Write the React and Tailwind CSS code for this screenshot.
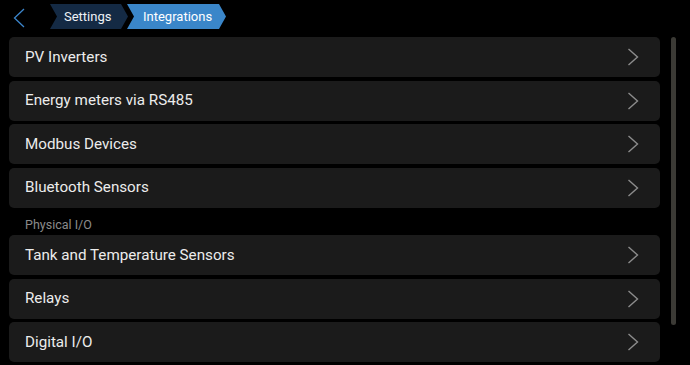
import React from 'react';

const items = [
  { label: 'PV Inverters' },
  { label: 'Energy meters via RS485' },
  { label: 'Modbus Devices' },
  { label: 'Bluetooth Sensors' },
  { section: 'Physical I/O' },
  { label: 'Tank and Temperature Sensors' },
  { label: 'Relays' },
  { label: 'Digital I/O' },
];

const Chevron = () => (
  <svg width="12" height="18" viewBox="0 0 12 18" fill="none">
    <path d="M1.5 1 L10.5 9 L1.5 17" stroke="#8c8c8c" strokeWidth="1.4" />
  </svg>
);

const Row = ({ label }) => (
  <div className="h-[40px] rounded-[5px] bg-[#1b1b1b] flex items-center justify-between pl-[16px] pr-[21px]">
    <span className="text-[15.2px] text-[#ececec]">{label}</span>
    <Chevron />
  </div>
);

export default function App() {
  return (
    <div className="w-[690px] h-[365px] bg-black overflow-hidden font-['Roboto',sans-serif]">
      {/* header */}
      <div className="h-[37px] flex items-start pt-[4px]">
        <div className="w-[45px] pt-[4px] pl-[13px]">
          <svg width="12" height="20" viewBox="0 0 12 20" fill="none">
            <path d="M11 1 L1.5 10 L11 19" stroke="#3c86cc" strokeWidth="1.3" />
          </svg>
        </div>
        <div className="flex items-center h-[25px] pl-[5px]">
          <div className="h-[25px] w-[78px] bg-[#142a44] flex items-center pl-[14px] pt-[1px] text-[13px] text-[#eef2f6] [clip-path:polygon(0_0,calc(100%-7px)_0,100%_50%,calc(100%-7px)_100%,0_100%,7px_50%)]">
            Settings
          </div>
          <div className="-ml-[1px] h-[25px] w-[99px] bg-[#3a86c9] flex items-center pl-[16px] pt-[1px] text-[13px] text-white [clip-path:polygon(0_0,calc(100%-7px)_0,100%_50%,calc(100%-7px)_100%,0_100%,7px_50%)]">
            Integrations
          </div>
        </div>
      </div>

      {/* list */}
      <div className="flex">
        <div className="w-[651px] ml-[9px] flex flex-col gap-[3.5px]">
          {items.map((it, i) =>
            it.section ? (
              <div key={i} className="h-[20.5px] flex items-end pl-[16px] pb-[0px] leading-none text-[12.5px] text-[#8b8b8b]">
                {it.section}
              </div>
            ) : (
              <Row key={i} label={it.label} />
            )
          )}
        </div>
        <div className="ml-[11px] w-[5px] h-[288px] rounded-full bg-[#3b3a35]" />
      </div>
    </div>
  );
}
